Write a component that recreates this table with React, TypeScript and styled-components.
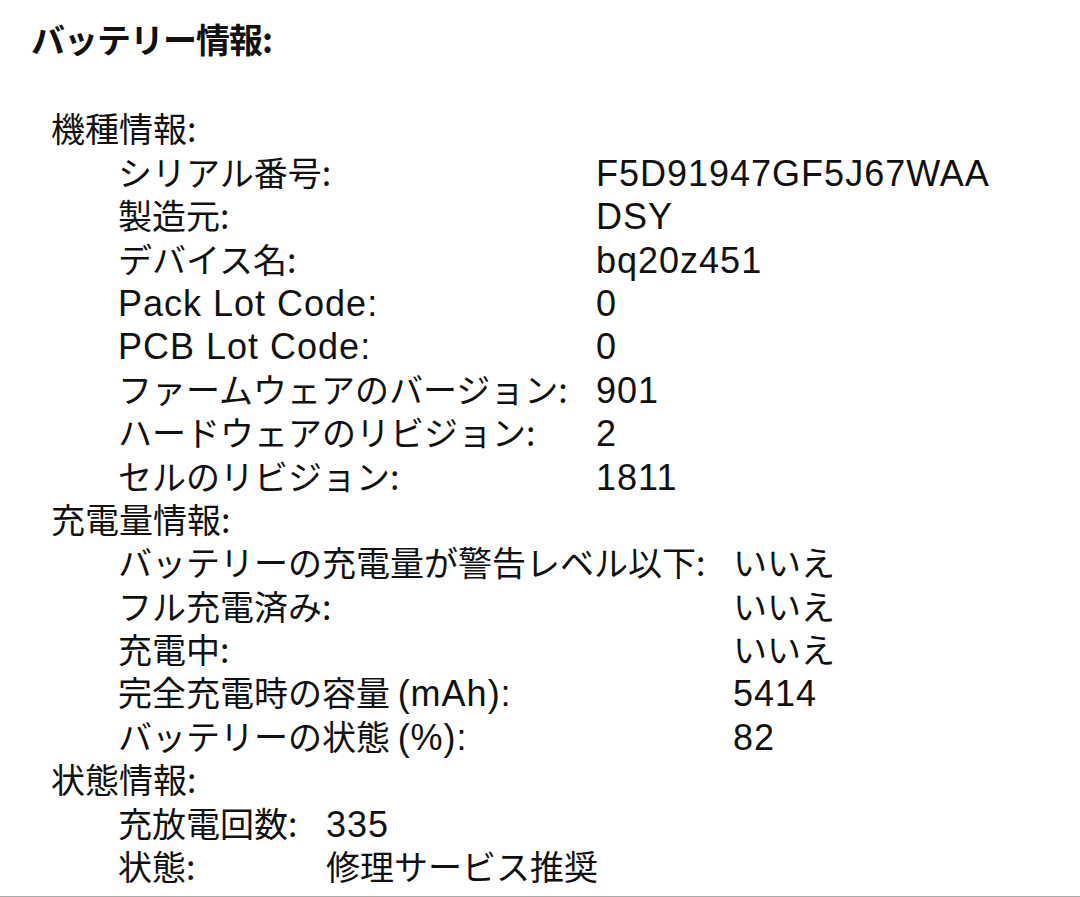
import React from "react";
import styled, { createGlobalStyle } from "styled-components";

const GlobalStyle = createGlobalStyle`
  html, body {
    margin: 0;
    padding: 0;
    background: #ffffff;
  }
  body {
    font-family: "Noto Sans CJK JP", "Liberation Sans", sans-serif;
    color: #111111;
  }
`;

const Page = styled.div`
  box-sizing: border-box;
  width: 1080px;
  height: 897px;
  padding: 17px 0 0 33px;
  border-bottom: 1px solid #a9a9a9;
  background: #ffffff;
  display: flex;
  flex-direction: column;
  overflow: hidden;
`;

const Title = styled.h1`
  margin: 0 0 0 -2px;
  font-family: "Noto Sans CJK JP", sans-serif;
  font-size: 34px;
  font-weight: 700;
  line-height: 43.4px;
  letter-spacing: -1px;
  color: #111111;
`;

const Sections = styled.div`
  margin-top: 46px;
  padding-left: 18px;
  display: flex;
  flex-direction: column;
`;

const Section = styled.section`
  display: flex;
  flex-direction: column;
`;

const SectionHeader = styled.div`
  font-size: 34px;
  line-height: 43.4px;
  height: 43.4px;
  white-space: nowrap;
`;

const Grid = styled.div<{ $labelWidth: number }>`
  display: grid;
  grid-template-columns: ${(p) => p.$labelWidth}px auto;
  grid-auto-rows: 43.4px;
  padding-left: 67px;
`;

const Cell = styled.div`
  font-size: 34px;
  line-height: 43.4px;
  height: 43.4px;
  white-space: nowrap;
`;

const Latin = styled.span`
  font-family: "Liberation Sans", Arial, sans-serif;
  font-size: 36px;
  line-height: 1;
  letter-spacing: 1px;
`;

type Row = [React.ReactNode, React.ReactNode];

const sections: { title: string; labelWidth: number; rows: Row[] }[] = [
  {
    title: "機種情報:",
    labelWidth: 478,
    rows: [
      ["シリアル番号:", <Latin>F5D91947GF5J67WAA</Latin>],
      ["製造元:", <Latin>DSY</Latin>],
      ["デバイス名:", <Latin>bq20z451</Latin>],
      [<Latin>Pack Lot Code:</Latin>, <Latin>0</Latin>],
      [<Latin>PCB Lot Code:</Latin>, <Latin>0</Latin>],
      ["ファームウェアのバージョン:", <Latin>901</Latin>],
      ["ハードウェアのリビジョン:", <Latin>2</Latin>],
      ["セルのリビジョン:", <Latin>1811</Latin>],
    ],
  },
  {
    title: "充電量情報:",
    labelWidth: 615,
    rows: [
      ["バッテリーの充電量が警告レベル以下:", "いいえ"],
      ["フル充電済み:", "いいえ"],
      ["充電中:", "いいえ"],
      [
        <>
          完全充電時の容量 <Latin>(mAh):</Latin>
        </>,
        <Latin>5414</Latin>,
      ],
      [
        <>
          バッテリーの状態 <Latin>(%):</Latin>
        </>,
        <Latin>82</Latin>,
      ],
    ],
  },
  {
    title: "状態情報:",
    labelWidth: 208,
    rows: [
      ["充放電回数:", <Latin>335</Latin>],
      ["状態:", "修理サービス推奨"],
    ],
  },
];

export default function App() {
  return (
    <>
      <GlobalStyle />
      <Page>
        <Title>バッテリー情報:</Title>
        <Sections>
          {sections.map((s) => (
            <Section key={s.title}>
              <SectionHeader>{s.title}</SectionHeader>
              <Grid $labelWidth={s.labelWidth}>
                {s.rows.map((r, i) => (
                  <React.Fragment key={i}>
                    <Cell>{r[0]}</Cell>
                    <Cell>{r[1]}</Cell>
                  </React.Fragment>
                ))}
              </Grid>
            </Section>
          ))}
        </Sections>
      </Page>
    </>
  );
}
